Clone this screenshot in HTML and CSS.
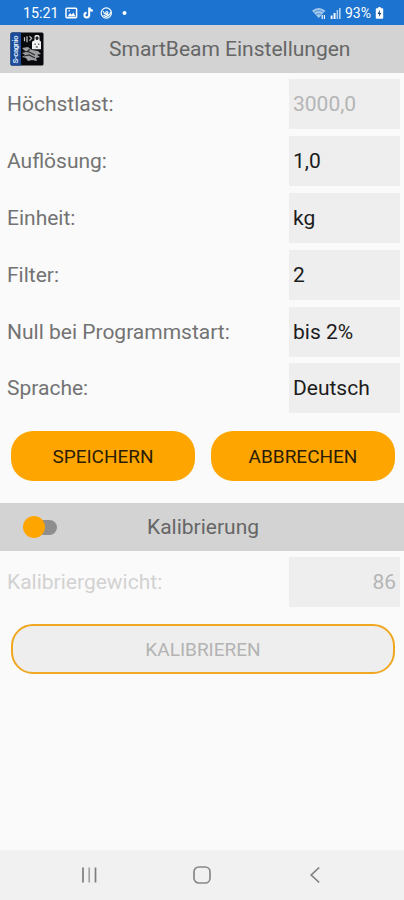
FILE: index.html
```html
<!DOCTYPE html>
<html lang="de">
<head>
    <meta charset="UTF-8">
    <meta name="viewport" content="width=device-width, initial-scale=1.0">
    <title>SmartBeam Einstellungen</title>
    <link rel="stylesheet" href="styles.css">
</head>
<body>
    <div class="statusbar">
        <span class="time">15:21</span>
        <svg class="status-left" width="66" height="14" viewBox="0 0 66 14">
            <!-- gallery -->
            <rect x="1" y="2.2" width="10.6" height="9.6" rx="1" fill="none" stroke="#fff" stroke-width="1.5"/>
            <path d="M2.5 10.5L5 7l1.8 1.8L8.3 6.6l2.3 3.9z" fill="#fff"/>
            <circle cx="4.2" cy="4.8" r=".8" fill="#fff"/>
            <!-- note -->
            <path d="M24.2 1.5v7.6a2.4 2.4 0 1 1-2.6-2.4M24.2 1.5c.3 2 1.6 3.1 3.6 3.3" fill="none" stroke="#fff" stroke-width="2"/>
            <!-- spiral -->
            <circle cx="41.3" cy="7" r="5.1" fill="none" stroke="#fff" stroke-width="1.2"/>
            <path d="M38.2 5.2c1 3.5 4.2 4 4.6 1.6c.3-1.6-2.2-1.7-2 0c.2 3.4 4.5 3 4.7-.8M38.5 9.2c2 1.5 4 1.3 5.5.2" fill="none" stroke="#fff" stroke-width="1.1"/>
            <circle cx="59.5" cy="7" r="2" fill="#fff"/>
        </svg>
        <svg class="status-right" width="30" height="14" viewBox="0 0 30 14">
            <path d="M0 4.8Q6.7-.8 13.4 4.8L6.7 12z" fill="#fff" opacity=".6"/>
            <path d="M2.2 6.3Q6.7 2.6 11.2 6.3M4.2 8.5Q6.7 6.6 9.2 8.5" fill="none" stroke="#1c74d0" stroke-width=".7"/>
            <path d="M10.2 9v4M12.4 9v4" stroke="#fff" stroke-width="1.1"/>
            <path d="M18.7 9.5h1.8V13h-1.8zM21.6 7h1.9v6h-1.9z" fill="#fff"/>
            <path d="M24.6 4h1.5v9h-1.5zM27 2h1.7v11H27z" fill="#fff" opacity=".65"/>
        </svg>
        <span class="percent">93%</span>
        <svg class="battery" width="9" height="12" viewBox="0 0 9 12">
            <path d="M1.6 1.2h1.7V0h2.4v1.2h1.7q.8 0 .8.8v9q0 .8-.8.8H1.6q-.8 0-.8-.8V2q0-.8.8-.8z" fill="#fff"/>
            <path d="M5 2.8L2.6 7h1.6l-.4 3L6.4 6H4.8z" fill="#174477"/>
        </svg>
    </div>

    <div class="titlebar">
        <svg class="logo" width="34" height="34" viewBox="0 0 34 34">
            <rect x=".5" y=".5" width="33" height="33" rx="1.5" fill="#08090c"/>
            <path d="M2 .5h9v33H2q-1.5 0-1.5-1.5V2Q.5.5 2 .5z" fill="#1c4b9b"/>
            <text class="logo-text" transform="translate(8.2 31.5) rotate(-90)" textLength="28">S-cagnio</text>
            <!-- kettlebell -->
            <path d="M24.5 8.2V4.5q0-1.5 1.5-1.5h2q1.5 0 1.5 1.5v3.7l1.5 1.5v7.5h-9V9.7z" fill="#f1f1f1"/>
            <path d="M26 5h2v2.3h-2zM24.5 12.2h1.3M28 12.2h1.3M25.8 15h2" fill="#222" stroke="#222"/>
            <!-- bluetooth waves -->
            <path d="M14.5 5.3v4M17 4.3v6M19.5 4.2l2.2 2-2.2 2.5" fill="none" stroke="#c8c8c8" stroke-width="1.2"/>
            <!-- handshake -->
            <path d="M12 16l6-1 4 3 6 1 3 3-4 .8 3 2.2-4 1 1 3-5-1-4 1-2-3-4-1 3-2-3-2 4-1z" fill="#9d9fa1"/>
            <path d="M13 19l6 1 6 3M14 24l5-1 6 3M20 17l-3 3" fill="none" stroke="#292b2d" stroke-width="1.2"/>
        </svg>
        <h1>SmartBeam Einstellungen</h1>
    </div>

    <div class="settings">
        <div class="row">
            <label for="maxLoad">Höchstlast:</label>
            <input type="text" id="maxLoad" value="3000,0" disabled>
        </div>
        <div class="row">
            <label for="resolution">Auflösung:</label>
            <input type="text" id="resolution" value="1,0">
        </div>
        <div class="row">
            <label for="unit">Einheit:</label>
            <input type="text" id="unit" value="kg">
        </div>
        <div class="row">
            <label for="filter">Filter:</label>
            <input type="text" id="filter" value="2">
        </div>
        <div class="row">
            <label for="zero">Null bei Programmstart:</label>
            <input type="text" id="zero" value="bis 2%">
        </div>
        <div class="row">
            <label for="language">Sprache:</label>
            <input type="text" id="language" value="Deutsch">
        </div>
    </div>

    <div class="buttons">
        <button>SPEICHERN</button>
        <button>ABBRECHEN</button>
    </div>

    <div class="calibration-bar">
        <div class="switch"><div class="knob"></div></div>
        <h2>Kalibrierung</h2>
    </div>

    <div class="calibration">
        <div class="row inactive">
            <label for="weight">Kalibriergewicht:</label>
            <input type="text" id="weight" class="number" value="86" disabled>
        </div>
        <button class="calibrate" disabled>KALIBRIEREN</button>
    </div>

    <div class="navbar">
        <svg width="18" height="18" viewBox="0 0 18 18">
            <path d="M3 1.5v15M15.5 1.5v15" stroke="#7d7d7d" stroke-width="1.7"/>
            <path d="M9.2 1.5v15" stroke="#a5a5a5" stroke-width="1.7"/>
        </svg>
        <svg width="18" height="18" viewBox="0 0 18 18">
            <rect x="1" y="1" width="16" height="16" rx="4.8" fill="none" stroke="#888" stroke-width="1.7"/>
        </svg>
        <svg width="18" height="18" viewBox="0 0 18 18">
            <path d="M13.2 1.5L5.2 9l8 7.5" fill="none" stroke="#808080" stroke-width="1.7"/>
        </svg>
    </div>
</body>
</html>
```
FILE: styles.css
```css
* {
    box-sizing: border-box;
}
body {
    font-family: Roboto, sans-serif;
    margin: 0;
    height: 900px;
    display: flex;
    flex-direction: column;
    background: #fafafa;
    color: #737373;
    font-size: 21px;
    overflow: hidden;
}
.statusbar {
    height: 25px;
    display: flex;
    align-items: center;
    padding: 0 20px 0 23px;
    background: #1c74d0;
    color: #fff;
    font-size: 14px;
}
.time {
    width: 42px;
    font-size: 14.3px;
}
.status-right {
    margin-left: auto;
}
.percent {
    width: 28px;
    margin-left: 3px;
}
.battery {
    margin-left: 2px;
}
.titlebar {
    height: 48px;
    display: flex;
    align-items: center;
    background: #d3d3d3;
}
.logo {
    margin-left: 10px;
}
.logo-text {
    font-size: 8px;
    font-weight: bold;
    fill: #d7e3f5;
}
h1, h2 {
    margin: 0;
    color: #666;
    font-size: 21px;
    font-weight: normal;
    line-height: 25px;
}
h1 {
    margin-left: 65px;
}
.settings {
    padding: 6px 4px 0 7px;
    display: flex;
    flex-direction: column;
    gap: 6.9px;
}
.row {
    display: flex;
    align-items: center;
    justify-content: space-between;
}
input {
    width: 111px;
    height: 50px;
    padding: 0 4px;
    border: none;
    border-radius: 0;
    background: #eee;
    color: #1c1c1c;
    font-family: inherit;
    font-size: 21px;
}
input:disabled {
    color: #b5b5b5;
}
.buttons {
    display: grid;
    grid-template-columns: 1fr 1fr;
    gap: 16px;
    padding: 18px 9px 22px 11px;
}
button {
    height: 50px;
    padding: 0;
    border: none;
    border-radius: 22px;
    background: #ffa500;
    color: #2b1d05;
    font-family: inherit;
    font-size: 19px;
}
.calibration-bar {
    height: 48px;
    display: flex;
    align-items: center;
    background: #d3d3d3;
}
.switch {
    width: 31px;
    height: 15px;
    margin-left: 26px;
    display: flex;
    align-items: center;
    border-radius: 8px;
    background: #8e8e8e;
}
.knob {
    width: 22px;
    height: 22px;
    margin-left: -3px;
    border-radius: 50%;
    background: #ffa500;
    flex-shrink: 0;
}
h2 {
    margin-left: 90px;
}
.calibration {
    padding: 6px 4px 0 7px;
}
.inactive label {
    color: #d2d2d2;
}
.number {
    text-align: right;
}
.calibrate {
    width: 384px;
    margin: 17px 0 0 4px;
    border: 2px solid #f0a721;
    background: #eee;
    color: #b3b3b3;
}
.navbar {
    height: 50px;
    margin-top: auto;
    display: flex;
    align-items: center;
    justify-content: center;
    gap: 95px;
    background: #f1f1f1;
}
```
